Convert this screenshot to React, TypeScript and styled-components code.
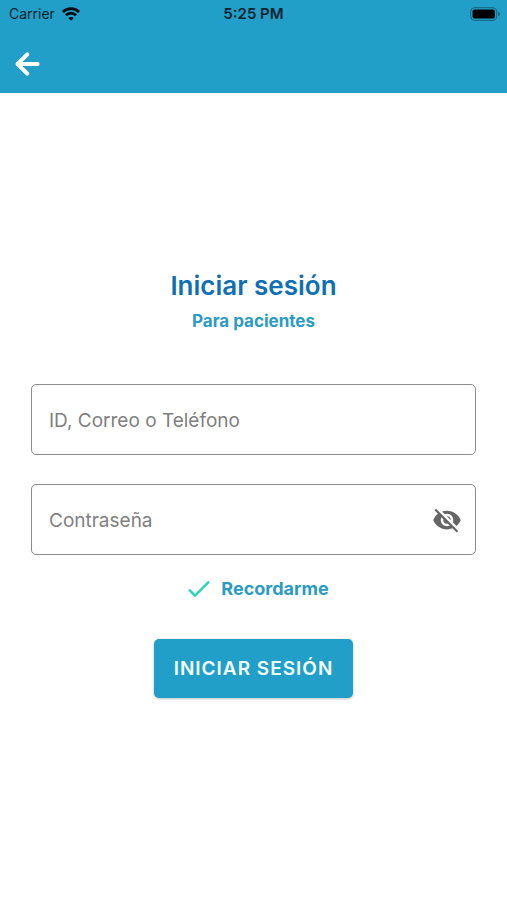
import React, { useState } from "react";
import styled, { createGlobalStyle } from "styled-components";

const colors = {
  bar: "#229fc8",
  title: "#0f6fb5",
  accent: "#2b9bc4",
  check: "#1cd9b4",
  border: "#8c8c8c",
  hint: "#808080",
  icon: "#666666",
};

const GlobalStyle = createGlobalStyle`
  *, *::before, *::after { box-sizing: border-box; }
  body { margin: 0; background: #ffffff; }
  body, input, button { font-family: Inter, "Liberation Sans", sans-serif; }
`;

const Screen = styled.div`
  min-height: 100vh;
  display: flex;
  flex-direction: column;
`;

const Header = styled.header`
  background: ${colors.bar};
`;

const StatusBar = styled.div`
  display: grid;
  grid-template-columns: 1fr auto 1fr;
  align-items: center;
  height: 27px;
  padding: 0 6px;
  font-size: 14px;
  color: #06232e;
`;

const Carrier = styled.div`
  display: flex;
  align-items: center;
  gap: 7px;
  padding-left: 3px;
`;

const Clock = styled.time`
  font-size: 15px;
  font-weight: 600;
`;

const Battery = styled.div`
  display: flex;
  justify-content: flex-end;
`;

const NavBar = styled.nav`
  display: flex;
  align-items: center;
  height: 66px;
  padding: 8px 12px 0;
`;

const IconButton = styled.button`
  display: flex;
  padding: 0;
  border: 0;
  background: none;
  color: inherit;
  cursor: pointer;
`;

const Main = styled.main`
  flex: 1;
  display: flex;
  flex-direction: column;
  justify-content: center;
  padding: 0 31px 28px;
`;

const Heading = styled.div`
  text-align: center;
  margin-bottom: 50px;
`;

const Title = styled.h1`
  margin: 0;
  font-size: 26px;
  line-height: 36px;
  font-weight: 600;
  color: ${colors.title};
`;

const Subtitle = styled.p`
  margin: 4px 0 0;
  font-size: 17px;
  line-height: 26px;
  font-weight: 700;
  color: ${colors.accent};
`;

const Form = styled.form`
  display: flex;
  flex-direction: column;
  align-items: center;
`;

const Field = styled.div`
  display: flex;
  align-items: center;
  align-self: stretch;
  height: 71px;
  margin-bottom: 29px;
  padding: 2px 13px 0 17px;
  border: 1px solid ${colors.border};
  border-radius: 5px;
  color: ${colors.icon};

  & + & {
    margin-bottom: 20px;
  }
`;

const TextInput = styled.input`
  flex: 1;
  min-width: 0;
  height: 100%;
  padding: 0;
  border: 0;
  outline: 0;
  background: none;
  font-size: 19px;
  color: #333333;

  &::placeholder {
    color: ${colors.hint};
    opacity: 1;
  }
`;

const Remember = styled.label`
  display: flex;
  align-items: center;
  gap: 11px;
  height: 28px;
  margin-bottom: 36px;
  padding-left: 10px;
  font-size: 18px;
  font-weight: 700;
  color: ${colors.accent};
  cursor: pointer;
`;

const CheckBox = styled.input`
  appearance: none;
  display: grid;
  width: 22px;
  height: 18px;
  margin: 0;
  cursor: pointer;
`;

const CheckSlot = styled.span`
  display: grid;

  & > * {
    grid-area: 1 / 1;
  }

  & > svg {
    pointer-events: none;
    visibility: hidden;
  }

  & > input:checked + svg {
    visibility: visible;
  }
`;

const Submit = styled.button`
  height: 59px;
  padding: 1px 20px 0;
  border: 0;
  border-radius: 5px;
  background: ${colors.bar};
  box-shadow: 0 1px 3px rgba(0, 0, 0, 0.25);
  font-size: 19px;
  font-weight: 600;
  letter-spacing: 1px;
  text-transform: uppercase;
  color: #f4ffff;
  cursor: pointer;
`;

const WifiIcon = () => (
  <svg width="18" height="14" viewBox="0 0 18 14" fill="none" stroke="#020a0e" strokeWidth="2.8" aria-hidden="true">
    <path d="M.9 5C5.4.4 12.6.4 17.1 5" />
    <path d="M4 8.3c2.8-2.9 7.200-2.900 10 0" />
    <path d="M9 13.700 6.300 11c1.500-1.500 3.900-1.500 5.400 0Z" fill="#020a0e" stroke="none" />
  </svg>
);

const BatteryIcon = () => (
  <svg width="31" height="14" viewBox="0 0 31 14" aria-hidden="true">
    <rect x=".7" y=".7" width="26" height="12.600" rx="3.800" fill="none" stroke="#14607a" />
    <rect x="2.500" y="2.500" width="22.400" height="9" rx="2" fill="#000" />
    <path d="M28.200 4.800c2.400.8 2.400 3.600 0 4.400Z" fill="#14607a" />
  </svg>
);

const BackIcon = () => (
  <svg width="30" height="28" viewBox="0 0 30 28" fill="none" stroke="#fff" strokeWidth="4" strokeLinecap="round" strokeLinejoin="round" aria-hidden="true">
    <path d="M15.300 4.300 5.600 14l9.700 9.700" />
    <path d="M6 14h19.600" />
  </svg>
);

const EyeOffIcon = () => (
  <svg width="30" height="30" viewBox="0 0 24 24" fill="currentColor" aria-hidden="true">
    <path d="M12 7c2.760 0 5 2.240 5 5 0 .65-.13 1.260-.36 1.830l2.920 2.920c1.510-1.260 2.700-2.890 3.430-4.750-1.730-4.390-6-7.500-11-7.500-1.400 0-2.740.25-3.980.7l2.160 2.160C10.740 7.130 11.350 7 12 7zM2 4.270l2.280 2.280.46.46C3.080 8.300 1.780 10.020 1 12c1.730 4.390 6 7.500 11 7.500 1.550 0 3.030-.3 4.380-.84l.42.42L19.730 22 21 20.730 3.270 3 2 4.270zM7.530 9.800l1.550 1.550c-.05.21-.08.43-.08.65 0 1.660 1.340 3 3 3 .22 0 .44-.03.65-.08l1.550 1.550c-.67.33-1.410.53-2.200.53-2.760 0-5-2.240-5-5 0-.79.2-1.530.53-2.200zm4.310-.78l3.150 3.150.02-.16c0-1.660-1.340-3-3-3l-.17.01z" />
  </svg>
);

const CheckIcon = () => (
  <svg width="22" height="18" viewBox="0 0 22 18" fill="none" stroke={colors.check} strokeWidth="2.200" aria-hidden="true">
    <path d="m1 9.600 6 6L21 1.600" />
  </svg>
);

export default function App() {
  const [visible, setVisible] = useState(false);

  return (
    <Screen>
      <GlobalStyle />
      <Header>
        <StatusBar>
          <Carrier>
            <span>Carrier</span>
            <WifiIcon />
          </Carrier>
          <Clock>5:25 PM</Clock>
          <Battery>
            <BatteryIcon />
          </Battery>
        </StatusBar>
        <NavBar>
          <IconButton type="button" aria-label="Volver">
            <BackIcon />
          </IconButton>
        </NavBar>
      </Header>
      <Main>
        <Heading>
          <Title>Iniciar sesión</Title>
          <Subtitle>Para pacientes</Subtitle>
        </Heading>
        <Form onSubmit={(event) => event.preventDefault()}>
          <Field>
            <TextInput type="text" placeholder="ID, Correo o Teléfono" aria-label="ID, Correo o Teléfono" />
          </Field>
          <Field>
            <TextInput type={visible ? "text" : "password"} placeholder="Contraseña" aria-label="Contraseña" />
            <IconButton type="button" aria-label="Mostrar contraseña" onClick={() => setVisible(!visible)}>
              <EyeOffIcon />
            </IconButton>
          </Field>
          <Remember>
            <CheckSlot>
              <CheckBox type="checkbox" defaultChecked />
              <CheckIcon />
            </CheckSlot>
            Recordarme
          </Remember>
          <Submit type="submit">Iniciar sesión</Submit>
        </Form>
      </Main>
    </Screen>
  );
}
